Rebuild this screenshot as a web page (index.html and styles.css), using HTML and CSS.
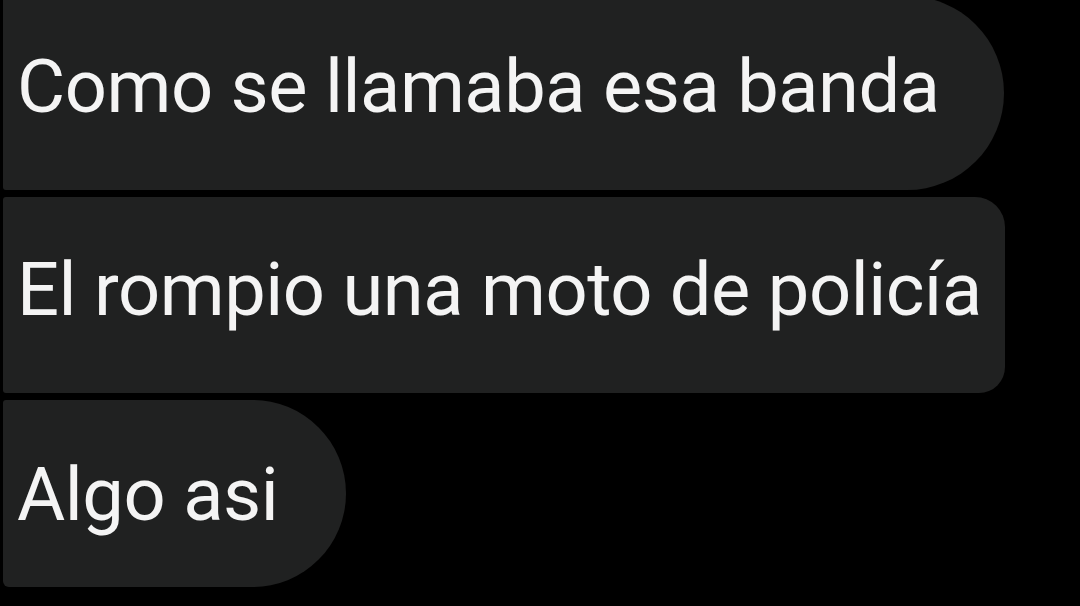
FILE: index.html
```html
<!DOCTYPE html>
<html lang="es">
<head>
<meta charset="utf-8">
<title>Chat</title>
<link rel="stylesheet" href="styles.css">
</head>
<body>
<main class="chat">
  <div class="bubble bubble--first">Como se llamaba esa banda</div>
  <div class="bubble bubble--middle">El rompio una moto de policía</div>
  <div class="bubble bubble--last">Algo asi</div>
</main>
</body>
</html>
```

FILE: styles.css
```css
html, body {
  margin: 0;
  padding: 0;
  background: #000;
  width: 1080px;
  height: 606px;
  overflow: hidden;
}

.chat {
  display: flex;
  flex-direction: column;
  align-items: flex-start;
  gap: 7px;
  padding-left: 3px;
  margin-top: -4px;
}

.bubble {
  background: #202121;
  color: #f4f4f4;
  font-family: Roboto, "Noto Sans", sans-serif;
  font-size: 74px;
  line-height: 74px;
  letter-spacing: -0.45px;
  white-space: nowrap;
  padding-left: 14px;
}

.bubble--first {
  padding-top: 54px;
  padding-bottom: 66px;
  padding-right: 64px;
  border-radius: 0 97px 97px 3px;
}

.bubble--middle {
  padding-top: 56px;
  padding-bottom: 66px;
  padding-right: 23px;
  border-radius: 3px 30px 26px 3px;
}

.bubble--last {
  padding-top: 58px;
  padding-bottom: 55px;
  padding-right: 68px;
  border-radius: 3px 95px 95px 6px;
}
```
